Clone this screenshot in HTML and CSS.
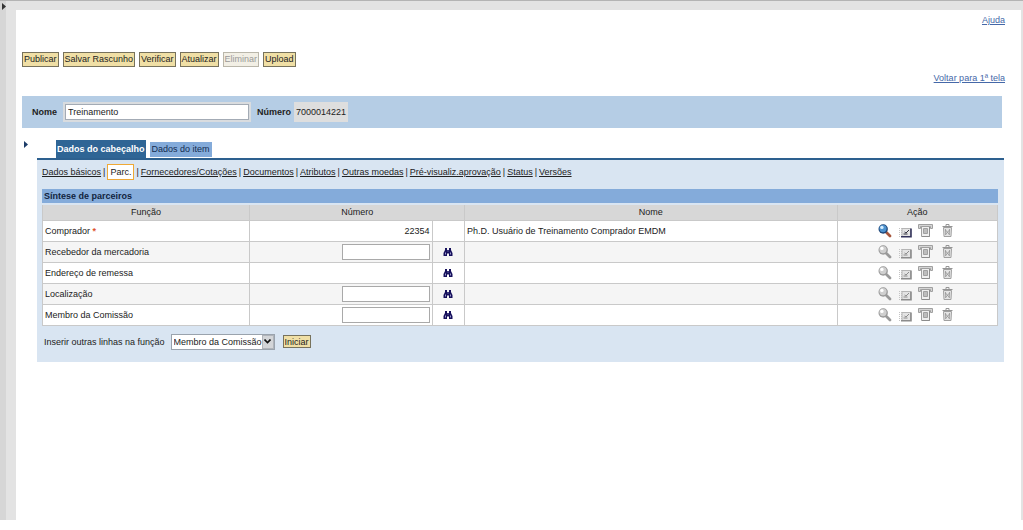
FILE: index.html
```html
<!DOCTYPE html>
<html lang="pt">
<head>
<meta charset="utf-8">
<title>Síntese de parceiros</title>
<link rel="stylesheet" href="styles.css">
</head>
<body>
<svg class="sprite" aria-hidden="true">
  <symbol id="lens" viewBox="0 0 14 14">
    <path class="handle" d="M8.500 8.500l3.500 3.500" stroke-width="2.800" stroke-linecap="round"/>
    <circle class="rim" cx="5.200" cy="5" r="4.700"/>
    <circle class="glass" cx="5" cy="4.600" r="3.600"/>
    <circle class="shine" cx="3.900" cy="3.400" r="1.700"/>
  </symbol>
  <symbol id="mail" viewBox="0 0 14 11">
    <path class="dots" d="M1.500 1v9M3.500 1v9" stroke-dasharray="1 1"/>
    <path class="paper" d="M4 1.500h8.500v8H4z"/>
    <path class="edge" d="M3 9.800h10V1.500" stroke-width="1.600"/>
    <path class="mark" d="M5.500 7h4M6.500 5l1.500 1 3-3"/>
  </symbol>
  <symbol id="print" viewBox="0 0 15 13">
    <path class="body" d="M.5.5h14v4h-2v-2h-10v2h-2z"/>
    <path class="sheet" d="M3.500 2.500h8v10h-8z"/>
    <path class="ink" d="M5.500 4.500h4v5h-4z"/>
    <path class="edge" d="M11.500 3v9.500H4"/>
  </symbol>
  <symbol id="bin" viewBox="0 0 11 14">
    <path class="can" d="M1.500 3.500h8l-.5 9h-7z"/>
    <path class="lid" d="M.5 2.500h10M4 2V.5h3V2"/>
    <path class="ribs" d="M3.500 5l.3 6M7.500 5l-.3 6M3.500 6l4 4.500M3.500 10.500l4-4.500"/>
  </symbol>
  <symbol id="find" viewBox="0 0 10 10">
    <path d="M2 1h2v2h2V1h2v2l1.500 3v3H6V6.500H4V9H.5V6L2 3z"/>
    <path class="glint" d="M2.500 5.500v2M7.500 5.500v2M5 3.500v1"/>
  </symbol>
</svg>
<div class="frame">
  <div class="rail"><svg class="arrow" viewBox="0 0 4 7"><path d="M0 0l4 3.500L0 7z"/></svg></div>
  <main class="page">
    <div class="help"><a href="#">Ajuda</a></div>
    <div class="toolbar">
      <button>Publicar</button><button>Salvar Rascunho</button><button>Verificar</button><button>Atualizar</button><button disabled>Eliminar</button><button>Upload</button>
    </div>
    <div class="back"><a href="#">Voltar para 1ª tela</a></div>
    <div class="namebar">
      <label for="nome">Nome</label>
      <input id="nome" type="text" value="Treinamento">
      <span class="caption">Número</span>
      <output class="number">7000014221</output>
    </div>
    <div class="content">
      <svg class="arrow blue" viewBox="0 0 4 7"><path d="M0 0l4 3.500L0 7z"/></svg>
      <div class="tabbox">
        <div class="tabs"><button class="tab active">Dados do cabeçalho</button><button class="tab">Dados do item</button></div>
        <section class="panel">
          <nav class="links">
            <a href="#">Dados básicos</a><span>|</span><a class="current" href="#">Parc.</a><span>|</span><a href="#">Fornecedores/Cotações</a><span>|</span><a href="#">Documentos</a><span>|</span><a href="#">Atributos</a><span>|</span><a href="#">Outras moedas</a><span>|</span><a href="#">Pré-visualiz.aprovação</a><span>|</span><a href="#">Status</a><span>|</span><a href="#">Versões</a>
          </nav>
          <h2>Síntese de parceiros</h2>
          <table>
            <colgroup><col class="c-role"><col class="c-num"><col class="c-find"><col class="c-name"><col class="c-act"></colgroup>
            <thead><tr><th>Função</th><th colspan="2">Número</th><th>Nome</th><th>Ação</th></tr></thead>
            <tbody>
              <tr><td>Comprador <b class="req">*</b></td><td class="num">22354</td><td></td><td>Ph.D. Usuário de Treinamento Comprador EMDM</td>
                <td><div class="actions on"><svg class="lens"><use href="#lens"/></svg><svg class="mail"><use href="#mail"/></svg><svg class="print"><use href="#print"/></svg><svg class="bin"><use href="#bin"/></svg></div></td></tr>
              <tr><td>Recebedor da mercadoria</td><td class="num"><input type="text" aria-label="Número do recebedor"></td><td><svg class="find"><use href="#find"/></svg></td><td></td>
                <td><div class="actions"><svg class="lens"><use href="#lens"/></svg><svg class="mail"><use href="#mail"/></svg><svg class="print"><use href="#print"/></svg><svg class="bin"><use href="#bin"/></svg></div></td></tr>
              <tr><td>Endereço de remessa</td><td></td><td><svg class="find"><use href="#find"/></svg></td><td></td>
                <td><div class="actions"><svg class="lens"><use href="#lens"/></svg><svg class="mail"><use href="#mail"/></svg><svg class="print"><use href="#print"/></svg><svg class="bin"><use href="#bin"/></svg></div></td></tr>
              <tr><td>Localização</td><td class="num"><input type="text" aria-label="Número da localização"></td><td><svg class="find"><use href="#find"/></svg></td><td></td>
                <td><div class="actions"><svg class="lens"><use href="#lens"/></svg><svg class="mail"><use href="#mail"/></svg><svg class="print"><use href="#print"/></svg><svg class="bin"><use href="#bin"/></svg></div></td></tr>
              <tr><td>Membro da Comissão</td><td class="num"><input type="text" aria-label="Número do membro"></td><td><svg class="find"><use href="#find"/></svg></td><td></td>
                <td><div class="actions"><svg class="lens"><use href="#lens"/></svg><svg class="mail"><use href="#mail"/></svg><svg class="print"><use href="#print"/></svg><svg class="bin"><use href="#bin"/></svg></div></td></tr>
            </tbody>
          </table>
          <div class="insert">
            <label for="funcao">Inserir outras linhas na função</label>
            <div class="select"><select id="funcao"><option>Membro da Comissão</option></select><span class="drop"><svg viewBox="0 0 7 5"><path d="M.5.5l3 3 3-3"/></svg></span></div>
            <button>Iniciar</button>
          </div>
        </section>
      </div>
    </div>
  </main>
</div>
</body>
</html>
```
FILE: styles.css
```css
* { box-sizing: border-box; }
body {
  margin: 0;
  background: #fff;
  color: #222;
  font: 9px/12px "Liberation Sans", Arial, sans-serif;
}
button, input, select { font: inherit; color: inherit; margin: 0; }
svg { display: block; }
.sprite { position: absolute; width: 0; height: 0; }

.frame {
  display: flex;
  min-height: calc(100vh - 10px);
  background: #e3e3e3;
  border-top: 1px solid #b4b4b4;
}
.rail { width: 6px; background: #d6d6d6; padding: 2px 0 0 2px; }
.arrow { width: 4px; height: 7px; fill: #333; flex: none; }
.arrow.blue { fill: #1c3c68; margin-top: 1px; }
.page {
  flex: 1;
  margin: 9px 2px 0 10px;
  padding: 4px 16px 0 6px;
  background: #fff;
}
.help, .back { display: flex; justify-content: flex-end; }
.help a, .back a { color: #4568a8; }

.toolbar { display: flex; gap: 4px; margin-top: 26px; }
.toolbar button, .insert button {
  height: 15px;
  padding: 0 1px 1px;
  line-height: 12px;
  background: #f0dfa5;
  border: 1px solid #77725c;
}
.toolbar button:disabled { background: #f2efe5; border-color: #b9b6aa; color: #999; }
.back { margin-top: 5px; }

.namebar {
  display: flex;
  align-items: center;
  height: 32px;
  margin: 12px 3px 0 0;
  padding: 0 10px;
  background: #b5cde5;
}
.namebar label, .caption { font-weight: bold; }
.namebar input {
  width: 188px;
  height: 20px;
  margin: 0 6px;
  padding: 0 3px;
  background: #fff;
  border: 2px solid #d9dcdf;
  outline: 1px solid #a3abb5;
  outline-offset: -3px;
}
.number { margin-left: 3px; padding: 4px 2px; background: #dedede; }

.content { display: flex; margin: 12px 1px 0 2px; }
.tabbox { flex: 1; margin-left: 9px; }
.tabs { display: flex; align-items: center; gap: 4px; padding-left: 19px; }
.tab { height: 15px; padding: 0 2px; border: 0; background: #84abda; color: #142c50; }
.tab.active { height: 18px; padding: 0 1px; background: #2f6595; color: #fff; font-weight: bold; }
.panel { background: #d9e5f2; border-top: 2px solid #2d608f; padding: 4px 6px 12px 5px; }
.links { display: flex; align-items: center; gap: 2px; height: 16px; white-space: nowrap; }
.links a { color: #222; }
.links .current {
  padding: 1px 2px;
  background: #fff;
  border: 1px solid #efa936;
  text-decoration: none;
}
h2 { margin: 9px 0 2px; padding: 1px 2px; font-size: 9px; line-height: 12px; background: #84abda; color: #112440; }

table { width: 100%; table-layout: fixed; border-collapse: collapse; background: #fff; }
.c-role { width: 21.700%; }
.c-num { width: 19.100%; }
.c-find { width: 3.400%; }
.c-name { width: 39%; }
.c-act { width: 16.800%; }
th { height: 15px; padding: 0; background: #d7d7d7; font-weight: normal; border: 1px solid #c9c9c9; border-top: 0; }
td { height: 21px; padding: 0 2px; border: 1px solid #c9c9c9; }
tbody tr:nth-child(even) { background: #f5f5f5; }
.req { color: #e0522c; }
.num { text-align: right; }
.num input { display: block; width: 88px; height: 16px; margin-left: auto; background: #fff; border: 1px solid #a9a9a9; }
.find { width: 10px; height: 10px; margin: 0 auto; fill: #16105c; }
.glint { stroke: #9d9dcf; fill: none; }

.actions { display: flex; align-items: center; justify-content: center; padding-right: 3px; }
.lens { width: 14px; height: 14px; margin-right: 6px; }
.mail { width: 14px; height: 11px; margin: 4px 6px 0 0; }
.print { width: 15px; height: 13px; margin-right: 9px; }
.bin { width: 11px; height: 14px; }
.rim { fill: var(--rim, #999); }
.glass { fill: var(--glass, #cfcfcf); }
.shine { fill: var(--shine, #fff); }
.handle { stroke: var(--handle, #999); }
.dots { stroke: #c4c4c4; fill: none; }
.paper { fill: #e4e4e4; stroke: #b5b5b5; }
.edge { stroke: var(--edge, #8c8c8c); fill: none; }
.mark { stroke: var(--mark, #8c8c8c); fill: none; }
.body { fill: #d5d5d5; stroke: #a0a0a0; }
.sheet { fill: #efefef; stroke: #a0a0a0; }
.ink { fill: #bdbdbd; stroke: #a0a0a0; }
.can { fill: #e4e4e4; stroke: #a0a0a0; }
.lid { stroke: #959595; fill: none; }
.ribs { stroke: #929292; stroke-width: 0.800; fill: none; }
.on .lens { --rim: #1f4678; --glass: #4d93cf; --shine: #d4edff; --handle: #a6563c; }
.on .mail { --edge: #34345c; --mark: #33333f; }

.insert { display: flex; align-items: center; height: 16px; margin-top: 8px; padding-left: 2px; }
.select { position: relative; margin: 0 8px 0 6px; }
.select select {
  display: block;
  width: 104px;
  height: 16px;
  padding: 0 2px;
  appearance: none;
  background: #fff;
  border: 1px solid #9aa3ad;
  border-radius: 0;
}
.drop {
  position: absolute;
  top: 1px;
  right: 1px;
  display: grid;
  place-items: center;
  width: 12px;
  height: 14px;
  background: #d3d5d8;
  border: 1px solid #b0b4ba;
  pointer-events: none;
}
.drop svg { width: 7px; height: 5px; fill: none; stroke: #111; stroke-width: 1.600; }
.insert button { height: 13px; padding: 0 1px; line-height: 10px; }
```
